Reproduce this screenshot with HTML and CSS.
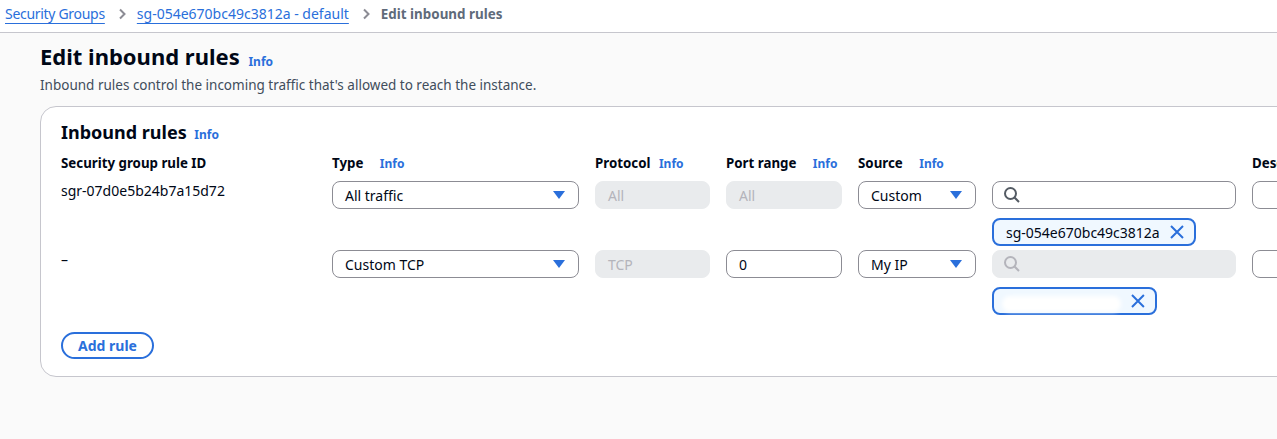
FILE: index.html
```html
<html lang="en">
	<head>
		<meta charset="UTF-8" />
		<meta name="viewport" content="width=device-width, initial-scale=1.0" />
		<title>Edit inbound rules</title>
		<link rel="stylesheet" href="styles.css">
	</head>

	<body>
		<nav class="breadcrumbs">
			<a href="#" class="crumb-tight">Security Groups</a>
			<span class="sep">
				<svg width="10" height="12" viewBox="0 0 10 12"><path d="M3 1.5 7.5 6 3 10.5" fill="none" stroke="#8c8c94" stroke-width="2" /></svg>
			</span>
			<a href="#">sg-054e670bc49c3812a - default</a>
			<span class="sep">
				<svg width="10" height="12" viewBox="0 0 10 12"><path d="M3 1.5 7.5 6 3 10.5" fill="none" stroke="#8c8c94" stroke-width="2" /></svg>
			</span>
			<span class="current">Edit inbound rules</span>
		</nav>

		<main class="page">
			<h1>Edit inbound rules <a class="info" href="#">Info</a></h1>
			<p class="description">Inbound rules control the incoming traffic that's allowed to reach the instance.</p>

			<section class="container">
				<h2>Inbound rules <a class="info" href="#">Info</a></h2>

				<div class="rules">
					<div class="col-head">Security group rule ID</div>
					<div class="col-head">Type <a class="info" href="#">Info</a></div>
					<div class="col-head">Protocol <a class="info info-tight" href="#">Info</a></div>
					<div class="col-head">Port range <a class="info" href="#">Info</a></div>
					<div class="col-head">Source <a class="info" href="#">Info</a></div>
					<div class="col-head"></div>
					<div class="col-head">Description</div>

					<!-- rule 1 -->
					<div class="cell-text">sgr-07d0e5b24b7a15d72</div>
					<div><div class="select">All traffic <span class="caret"></span></div></div>
					<div><div class="field disabled">All</div></div>
					<div><div class="field disabled">All</div></div>
					<div><div class="select">Custom <span class="caret"></span></div></div>
					<div>
						<div class="field search">
							<svg width="18" height="18" viewBox="0 0 18 18"><circle cx="7.5" cy="7.5" r="5.5" fill="none" stroke="#545b64" stroke-width="2" /><path d="M11.5 11.5 16 16" stroke="#545b64" stroke-width="2" /></svg>
						</div>
						<div class="token">sg-054e670bc49c3812a
							<svg width="16" height="16" viewBox="0 0 16 16"><path d="M2 2 14 14M14 2 2 14" stroke="#2a6fdb" stroke-width="2" /></svg>
						</div>
					</div>
					<div><div class="field"></div></div>

					<!-- rule 2 -->
					<div class="cell-text">–</div>
					<div><div class="select">Custom TCP <span class="caret"></span></div></div>
					<div><div class="field disabled">TCP</div></div>
					<div><div class="field">0</div></div>
					<div><div class="select">My IP <span class="caret"></span></div></div>
					<div>
						<div class="field search disabled">
							<svg width="18" height="18" viewBox="0 0 18 18"><circle cx="7.5" cy="7.5" r="5.5" fill="none" stroke="#b4b4bb" stroke-width="2" /><path d="M11.5 11.5 16 16" stroke="#b4b4bb" stroke-width="2" /></svg>
						</div>
						<div class="token token-ip">
							<span class="redacted"></span>
							<svg width="16" height="16" viewBox="0 0 16 16"><path d="M2 2 14 14M14 2 2 14" stroke="#2a6fdb" stroke-width="2" /></svg>
						</div>
					</div>
					<div><div class="field"></div></div>
				</div>

				<button class="button">Add rule</button>
			</section>
		</main>
	</body>
</html>
```

FILE: styles.css
```css
body {
	font-family: 'Noto Sans', 'Open Sans', sans-serif;
	margin: 0;
	padding: 0;
	background: #fafafa;
	color: #000716;
	height: 100vh;
	overflow: hidden;
	font-size: 14px;
}

a {
	color: #2a6fdb;
}

.breadcrumbs {
	display: flex;
	align-items: center;
	height: 33px;
	padding: 0 5px 5px;
	box-sizing: border-box;
	background: #ffffff;
	border-bottom: 1px solid #c6c6cd;
	font-size: 14px;
	line-height: 20px;
}

.breadcrumbs a {
	text-decoration: underline;
	text-underline-offset: 4px;
	text-decoration-thickness: 1px;
}

.breadcrumbs .crumb-tight {
	letter-spacing: -0.3px;
}

.breadcrumbs .sep {
	display: flex;
	align-items: center;
	padding: 0 10px 0 12px;
}

.breadcrumbs .current {
	font-weight: bold;
	color: #5f6b7a;
	font-size: 13.4px;
}

.page {
	padding: 9px 0 0 40px;
}

h1 {
	font-size: 22px;
	line-height: 28px;
	font-weight: bold;
	margin: 0;
}

h1 .info {
	margin-left: 3px;
	vertical-align: -1px;
}

.info {
	font-size: 12px;
	line-height: 1;
	font-weight: bold;
	text-decoration: none;
	color: #2a6fdb;
}

.description {
	margin: 5px 0 0;
	line-height: 20px;
	font-size: 13.5px;
	color: #414d5c;
}

.container {
	margin-top: 11px;
	width: 1400px;
	background: #ffffff;
	border: 1px solid #c6c6cd;
	border-radius: 16px;
	padding: 14px 20px 17px 20px;
	box-sizing: border-box;
}

h2 {
	font-size: 18px;
	line-height: 22px;
	font-weight: bold;
	margin: 0;
}

h2 .info {
	margin-left: 3px;
}

.rules {
	display: grid;
	grid-template-columns: 255px 247px 115px 116px 118px 244px 200px;
	column-gap: 16px;
	row-gap: 4px;
	margin-top: 10px;
	align-items: start;
}

.col-head {
	font-weight: bold;
	font-size: 13.3px;
	line-height: 20px;
	height: 20px;
	margin-bottom: 4px;
	white-space: nowrap;
}

.col-head .info {
	margin-left: 13px;
}

.col-head .info-tight {
	margin-left: 5px;
}

.cell-text {
	line-height: 20px;
}

.field,
.select {
	display: flex;
	align-items: center;
	height: 28px;
	padding: 0 12px;
	border: 1px solid #8c8c94;
	border-radius: 8px;
	box-sizing: border-box;
	background: #ffffff;
	color: #000716;
}

.select {
	justify-content: space-between;
}

.caret {
	width: 0;
	height: 0;
	border-left: 6px solid transparent;
	border-right: 6px solid transparent;
	border-top: 8px solid #2a6fdb;
	margin-right: 1px;
}

.field.disabled {
	background: #e9ebed;
	border-color: #e9ebed;
	color: #b4b4bb;
}

.field.search {
	padding-left: 10px;
}

.token {
	display: inline-flex;
	align-items: center;
	gap: 9px;
	height: 28px;
	margin-top: 9px;
	padding: 0 9px 0 12px;
	border: 2px solid #2a6fdb;
	border-radius: 8px;
	box-sizing: border-box;
	background: #f0f8ff;
}

.token-ip {
	width: 165px;
	justify-content: space-between;
	padding-left: 8px;
}

.redacted {
	display: block;
	width: 120px;
	height: 16px;
	background: #ffffff;
	border-radius: 8px;
	filter: blur(2px);
	margin-top: 6px;
}

.button {
	display: inline-block;
	margin-top: 17px;
	padding: 0 15px;
	height: 27px;
	font-family: inherit;
	font-size: 14px;
	font-weight: bold;
	color: #2a6fdb;
	background: #ffffff;
	border: 2px solid #2a6fdb;
	border-radius: 20px;
	cursor: pointer;
}
```
